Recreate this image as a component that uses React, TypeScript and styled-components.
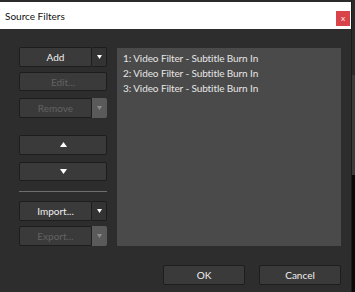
import styled, { createGlobalStyle } from "styled-components";

const GlobalStyle = createGlobalStyle`
  html, body {
    margin: 0;
    padding: 0;
    background: #1c1c1c;
  }
  body {
    font-family: Lato, "Noto Sans", "Liberation Sans", sans-serif;
  }
`;

const filters = [
  "1: Video Filter - Subtitle Burn In",
  "2: Video Filter - Subtitle Burn In",
  "3: Video Filter - Subtitle Burn In",
];

function Triangle({ up, size = 7, color = "#fff" }: { up?: boolean; size?: number; color?: string }) {
  const h = Math.round(size * 0.75);
  return (
    <svg width={size} height={h} viewBox={`0 0 ${size} ${h}`}>
      <polygon
        points={up ? `0,${h} ${size / 2},0 ${size},${h}` : `0,0 ${size},0 ${size / 2},${h}`}
        fill={color}
      />
    </svg>
  );
}

export default function App() {
  return (
    <>
      <GlobalStyle />
      <Screen>
        <Dialog>
          <TitleBar>
            <Title>Source Filters</Title>
            <CloseBtn>x</CloseBtn>
          </TitleBar>
          <Body>
            <Main>
              <Side>
                <Split>
                  <Btn>Add</Btn>
                  <Arrow>
                    <Triangle size={5} />
                  </Arrow>
                </Split>
                <Btn $disabled $gap={5}>Edit...</Btn>
                <Split $gap={7}>
                  <Btn $disabled>Remove</Btn>
                  <Arrow $disabled>
                    <Triangle size={5} color="#8c8c8c" />
                  </Arrow>
                </Split>
                <Btn $gap={17}>
                  <Triangle up />
                </Btn>
                <Btn $gap={7}>
                  <Triangle />
                </Btn>
                <Separator />
                <Split>
                  <Btn>Import...</Btn>
                  <Arrow>
                    <Triangle size={5} />
                  </Arrow>
                </Split>
                <Split $gap={5}>
                  <Btn $disabled>Export...</Btn>
                  <Arrow $disabled>
                    <Triangle size={5} color="#8c8c8c" />
                  </Arrow>
                </Split>
              </Side>
              <List>
                {filters.map((f) => (
                  <Item key={f}>{f}</Item>
                ))}
              </List>
            </Main>
            <Footer>
              <FooterBtn>OK</FooterBtn>
              <FooterBtn>Cancel</FooterBtn>
            </Footer>
          </Body>
        </Dialog>
        <Behind />
      </Screen>
    </>
  );
}

const Screen = styled.div`
  display: flex;
  width: 355px;
  height: 292px;
  overflow: hidden;
`;
const Dialog = styled.div`
  width: 352px;
  height: 292px;
  display: flex;
  flex-direction: column;
  background: #2d2d2d;
  border-top: 2px solid #2b2b2b;
  border-right: 1px solid #1a1a1a;
  box-sizing: border-box;
`;
const TitleBar = styled.div`
  height: 27px;
  background: #ffffff;
  display: flex;
  align-items: center;
  justify-content: space-between;
  padding: 0 1px 0 5px;
`;
const Title = styled.span`
  font-size: 10px;
  color: #111;
`;
const CloseBtn = styled.div`
  width: 14px;
  height: 15px;
  background: #d9434a;
  color: #f3d0d0;
  font-size: 8px;
  font-weight: 700;
  display: flex;
  align-items: center;
  justify-content: center;
  margin-top: 5px;
`;
const Body = styled.div`
  flex: 1;
  display: flex;
  flex-direction: column;
  padding: 18px 10px 0 19px;
`;
const Main = styled.div`
  display: flex;
  gap: 10px;
`;
const Side = styled.div`
  width: 88px;
  display: flex;
  flex-direction: column;
`;
const Split = styled.div<{ $gap?: number }>`
  display: flex;
  margin-top: ${(p) => p.$gap ?? 0}px;
`;
const Btn = styled.div<{ $disabled?: boolean; $gap?: number }>`
  flex: 1;
  height: 20px;
  box-sizing: border-box;
  margin-top: ${(p) => p.$gap ?? 0}px;
  background: #3a3a3a;
  border: 1px solid #1d1d1d;
  border-radius: 2px;
  color: ${(p) => (p.$disabled ? "#626262" : "#f0f0f0")};
  font-size: 10px;
  display: flex;
  align-items: center;
  justify-content: center;
`;
const Arrow = styled.div<{ $disabled?: boolean }>`
  width: 15px;
  height: 20px;
  box-sizing: border-box;
  background: ${(p) => (p.$disabled ? "#5a5a5a" : "#333333")};
  border: 1px solid ${(p) => (p.$disabled ? "#5a5a5a" : "#1d1d1d")};
  border-left: none;
  border-radius: 0 2px 2px 0;
  display: flex;
  align-items: center;
  justify-content: center;
`;
const Separator = styled.div`
  height: 1px;
  background: #6e6e6e;
  margin: 10px 0 9px;
`;
const List = styled.div`
  width: 224px;
  height: 198px;
  margin-top: 1px;
  background: #4a4a4a;
  padding: 3px 6px;
  box-sizing: border-box;
`;
const Item = styled.div`
  font-size: 10px;
  line-height: 15px;
  letter-spacing: -0.1px;
  color: #e6e6e6;
  white-space: nowrap;
`;
const Footer = styled.div`
  display: flex;
  justify-content: flex-end;
  gap: 14px;
  margin-top: 19px;
`;
const FooterBtn = styled.div`
  width: 82px;
  height: 20px;
  box-sizing: border-box;
  background: #3a3a3a;
  border: 1px solid #1d1d1d;
  border-radius: 2px;
  color: #f0f0f0;
  font-size: 10px;
  display: flex;
  align-items: center;
  justify-content: center;
`;
const Behind = styled.div`
  flex: 1;
  background: linear-gradient(
    #2b2b2b 0 75px,
    #3c3c3c 75px 175px,
    #0a0a0a 175px
  );
`;
